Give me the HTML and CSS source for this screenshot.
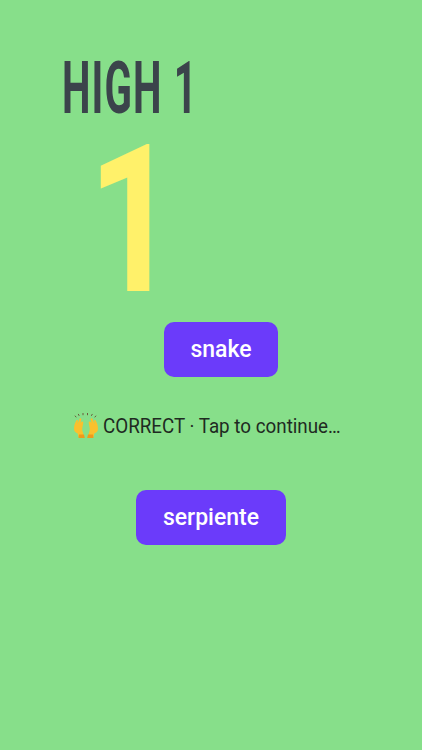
FILE: index.html
```html
<!DOCTYPE html>
<html lang="en">
<head>
<meta charset="utf-8">
<title>Snake quiz</title>
<link rel="stylesheet" href="styles.css">
</head>
<body>
<main class="screen">
  <h1 class="high">HIGH 1</h1>
  <div class="score">1</div>
  <button class="choice choice-snake">snake</button>
  <p class="status">
    <svg class="hands" viewBox="0 0 28 28" aria-hidden="true">
      <g fill="none" stroke="#6b5a3a" stroke-width="1" stroke-linecap="round">
        <path d="M7 3.5 6.4 2.3M11 2.8V1.4M15.5 2.8V1.4M19.5 3.5 20.2 2.3M23 5l.8-1M4 5l-.8-1"/>
      </g>
      <path fill="#fbc02d" d="M2 17c0-3 .8-6 2.400-8.500.6-.9 1.700-.4 1.500.6l-.6 3 2.300-5.300c.5-1 1.900-.5 1.700.6l-.8 3.600 1-1.200c.8-.8 2 0 1.800 1l-1 5.200c-.3 2 .2 3.200.7 4.500l1 4.500H6.500l-.8-3.500C3.500 20.500 2 19.500 2 17Z"/>
      <path fill="#fbc02d" d="M26 17c0-3-.8-6-2.400-8.500-.6-.9-1.700-.4-1.500.6l.6 3-2.300-5.300c-.5-1-1.900-.5-1.700.6l.8 3.600-1-1.200c-.8-.8-2 0-1.800 1l1 5.200c.3 2-.2 3.200-.7 4.500l-1 4.500h5.500l.8-3.500C24.500 20.500 26 19.500 26 17Z"/>
      <path fill="#f09a1a" d="M7 22.500h5l.8 3.500H6.500ZM16 22.500h5l.5 3.500h-6.300Z"/>
    </svg>
    <span>CORRECT · Tap to continue…</span>
  </p>
  <button class="choice choice-serpiente">serpiente</button>
</main>
</body>
</html>
```
FILE: styles.css
```css
* { box-sizing: border-box; }
html, body { margin: 0; height: 100%; }
body { background: #87df8a; font-family: "Roboto", "Liberation Sans", sans-serif; overflow: hidden; }
.screen { display: flex; flex-direction: column; align-items: flex-start; height: 750px; padding-top: 58px; }
.high {
  margin: 0 0 0 62px; height: 62px; line-height: 62px;
  font-size: 72px; font-weight: 700; color: #3b444b; white-space: nowrap;
  transform: scaleX(.56); transform-origin: left center; letter-spacing: 2px;
}
.score {
  margin: 0 0 0 88px; height: 202px; line-height: 202px; 
  font-size: 206px; font-weight: 700; color: #fff16a;
  transform: scaleX(.76); transform-origin: left center;
}
.choice {
  display: block; height: 55px; border: 0; border-radius: 10px; background: #6b3bfa; color: #fff;
  font: 500 23px "Roboto", sans-serif; padding: 0;
}
.choice-snake { width: 114px; margin-left: 164px; }
.choice-serpiente { width: 150px; margin-left: 136px; }
.status {
  display: flex; align-items: center; height: 28px; margin: 35px 0 50px 72px;
  font-size: 20px; color: #1f2a22; white-space: nowrap;
}
.status span { display: block; margin-left: 3px; transform: scaleX(.94); transform-origin: left center; }
.hands { width: 28px; height: 28px; flex: none; }
```
